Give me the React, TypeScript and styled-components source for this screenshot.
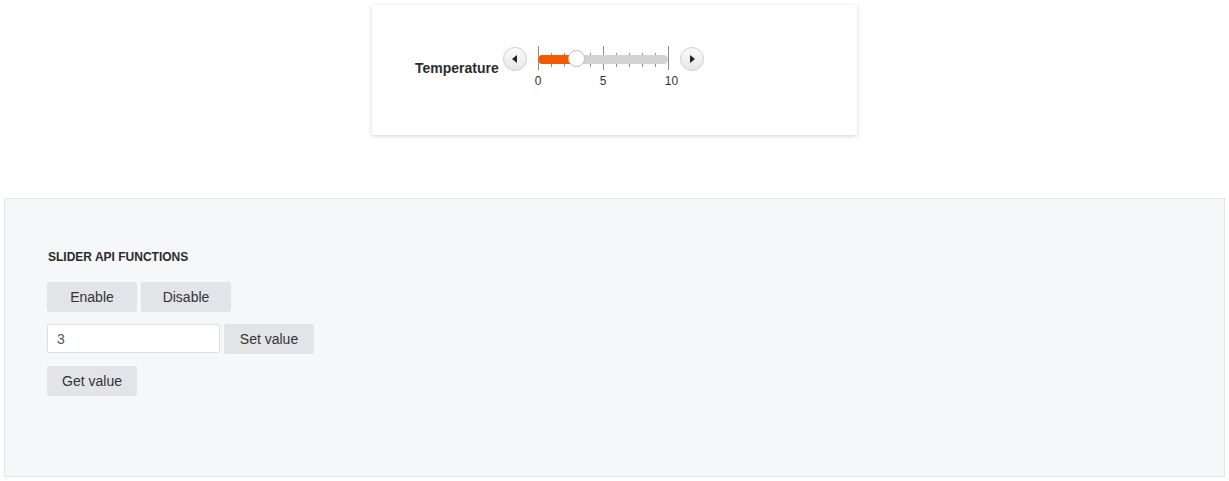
import React, { useState } from 'react';
import styled, { createGlobalStyle } from 'styled-components';

const GlobalStyle = createGlobalStyle`
  body {
    margin: 0;
    background: #ffffff;
    font-family: "Liberation Sans", Arial, sans-serif;
    color: #333333;
  }
`;

const Page = styled.div`
  padding-top: 5px;
`;

const Card = styled.div`
  width: 485px;
  height: 130px;
  margin: 0 auto;
  box-sizing: border-box;
  background: #ffffff;
  box-shadow: 0 1px 4px rgba(0, 0, 0, 0.18);
  padding: 41px 0 0 43px;
`;

const SliderRow = styled.div`
  display: flex;
  align-items: flex-start;
`;

const Label = styled.span`
  font-size: 14px;
  line-height: 16px;
  font-weight: bold;
  color: #2b2b2b;
  margin-top: 14px;
  margin-right: 4px;
`;

const NavButton = styled.button<{ $side: 'left' | 'right' }>`
  width: 24px;
  height: 24px;
  margin-top: 1px;
  padding: 0;
  border-radius: 50%;
  border: 1px solid #cfcfcf;
  background: linear-gradient(#fbfbfb, #e8e8e8);
  display: flex;
  align-items: center;
  justify-content: center;
  margin-left: ${p => (p.$side === 'right' ? '11px' : '0')};
  margin-right: ${p => (p.$side === 'left' ? '11px' : '0')};
  cursor: pointer;
`;

const Arrow = styled.span<{ $dir: 'left' | 'right' }>`
  width: 0;
  height: 0;
  border-top: 4px solid transparent;
  border-bottom: 4px solid transparent;
  ${p => (p.$dir === 'left' ? 'border-right: 5px solid #222;' : 'border-left: 5px solid #222;')}
  margin-left: ${p => (p.$dir === 'left' ? '-1px' : '1px')};
`;

const SliderBox = styled.div`
  position: relative;
  width: 131px;
  height: 42px;
`;

const Tick = styled.span<{ $major: boolean }>`
  position: absolute;
  width: 1px;
  background: #8c8c8c;
  top: ${p => (p.$major ? '0' : '7px')};
  height: ${p => (p.$major ? '24px' : '14px')};
`;

const Track = styled.div`
  position: absolute;
  left: 0;
  top: 9px;
  width: 130px;
  height: 9px;
  border-radius: 5px;
  background: #d3d3d3;
`;

const Fill = styled.div`
  position: absolute;
  left: 0;
  top: 0;
  height: 100%;
  border-radius: 5px 0 0 5px;
  background: #f45a00;
`;

const Handle = styled.span`
  position: absolute;
  top: 4px;
  width: 17px;
  height: 17px;
  margin-left: -9px;
  box-sizing: border-box;
  border-radius: 50%;
  border: 1px solid #c4c4c4;
  background: #ffffff;
  box-shadow: 0 0 1px rgba(0, 0, 0, 0.1);
`;

const TickLabel = styled.span`
  position: absolute;
  top: 28px;
  margin-left: -3px;
  font-size: 12px;
  line-height: 14px;
  color: #333333;
`;

const Panel = styled.div`
  margin: 63px 4px 0;
  height: 279px;
  box-sizing: border-box;
  background: #f6f7f9;
  border: 1px solid #e3e5e8;
  padding: 51px 0 0 42px;
`;

const Heading = styled.h4`
  margin: 0 0 17px;
  padding-left: 1px;
  font-size: 12px;
  line-height: 15px;
  font-weight: bold;
  text-transform: uppercase;
  color: #2b2b2b;
`;

const Controls = styled.div`
  display: flex;
  flex-direction: column;
  gap: 12px;
`;

const ButtonRow = styled.div`
  display: flex;
  gap: 4px;
`;

const ApiButton = styled.button`
  width: 90px;
  height: 30px;
  border: none;
  border-radius: 2px;
  background: #e3e4e8;
  color: #333333;
  font-family: "Liberation Sans", Arial, sans-serif;
  font-size: 14px;
  padding: 0;
  cursor: pointer;
`;

const ValueInput = styled.input`
  width: 173px;
  height: 29px;
  box-sizing: border-box;
  border: 1px solid #dcdde0;
  border-radius: 2px;
  background: #ffffff;
  padding: 0 9px;
  font-family: "Liberation Sans", Arial, sans-serif;
  font-size: 14px;
  color: #555555;
  outline: none;
`;

const MIN = 0;
const MAX = 10;
const WIDTH = 130;

const Slider = ({ value }: { value: number }) => {
    const pos = (v: number) => ((v - MIN) / (MAX - MIN)) * WIDTH;
    const steps = Array.from({ length: MAX - MIN + 1 }, (_, i) => MIN + i);
    return (
        <SliderBox>
            {steps.map(s => (
                <Tick key={s} $major={s % 5 === 0} style={{ left: pos(s) }} />
            ))}
            <Track>
                <Fill style={{ width: pos(value) }} />
            </Track>
            <Handle style={{ left: pos(value) }} />
            {steps.filter(s => s % 5 === 0).map(s => (
                <TickLabel key={s} style={{ left: pos(s) }}>{s}</TickLabel>
            ))}
        </SliderBox>
    );
};

const App = () => {
    const [value, setValue] = useState(3);
    const [input, setInput] = useState('3');

    return (
        <>
            <GlobalStyle />
            <Page>
                <Card>
                    <SliderRow>
                        <Label>Temperature</Label>
                        <NavButton $side="left" onClick={() => setValue(Math.max(MIN, value - 1))}>
                            <Arrow $dir="left" />
                        </NavButton>
                        <Slider value={value} />
                        <NavButton $side="right" onClick={() => setValue(Math.min(MAX, value + 1))}>
                            <Arrow $dir="right" />
                        </NavButton>
                    </SliderRow>
                </Card>
                <Panel>
                    <Heading>Slider API Functions</Heading>
                    <Controls>
                        <ButtonRow>
                            <ApiButton>Enable</ApiButton>
                            <ApiButton>Disable</ApiButton>
                        </ButtonRow>
                        <ButtonRow>
                            <ValueInput value={input} onChange={e => setInput(e.target.value)} />
                            <ApiButton onClick={() => setValue(Number(input) || 0)}>Set value</ApiButton>
                        </ButtonRow>
                        <ButtonRow>
                            <ApiButton onClick={() => setInput(String(value))}>Get value</ApiButton>
                        </ButtonRow>
                    </Controls>
                </Panel>
            </Page>
        </>
    );
};

export default App;
